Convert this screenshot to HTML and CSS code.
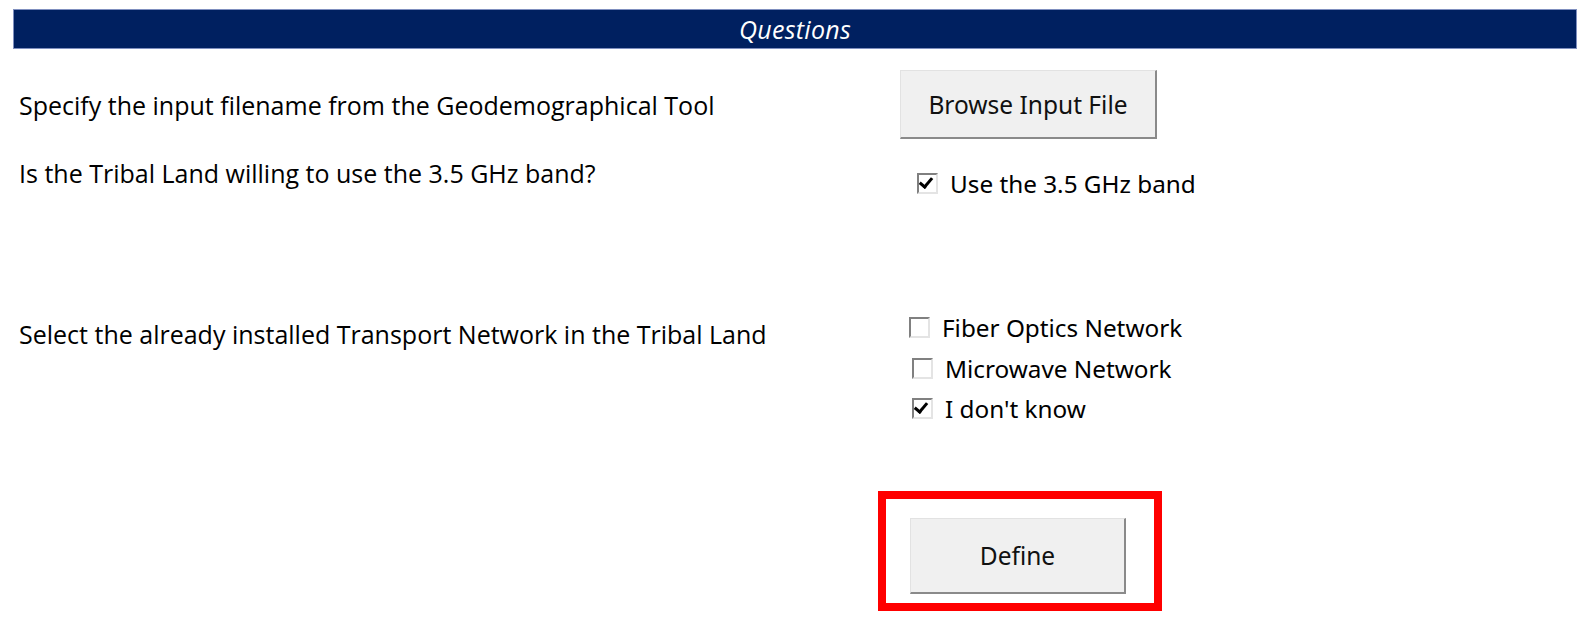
FILE: index.html
```html
<!DOCTYPE html>
<html>
<head>
<meta charset="utf-8">
<link rel="stylesheet" href="styles.css">
</head>
<body>
<div class="page">
  <div class="header">Questions</div>
  <div class="row row-file">
    <div class="label">Specify the input filename from the Geodemographical Tool</div>
    <div class="ctrl">
      <button class="btn btn-browse">Browse Input File</button>
    </div>
  </div>
  <div class="row row-band">
    <div class="label">Is the Tribal Land willing to use the 3.5 GHz band?</div>
    <div class="ctrl">
      <label class="check check-band"><span class="box checked"></span><span class="ctext">Use the 3.5 GHz band</span></label>
    </div>
  </div>
  <div class="row row-net">
    <div class="label">Select the already installed Transport Network in the Tribal Land</div>
    <div class="ctrl checks">
      <label class="check check-fiber"><span class="box"></span><span class="ctext">Fiber Optics Network</span></label>
      <label class="check check-micro"><span class="box"></span><span class="ctext">Microwave Network</span></label>
      <label class="check check-micro"><span class="box checked"></span><span class="ctext">I don't know</span></label>
    </div>
  </div>
  <div class="row row-define">
    <div class="label"></div>
    <div class="ctrl">
      <div class="highlight">
        <button class="btn btn-define">Define</button>
      </div>
    </div>
  </div>
</div>
</body>
</html>
```
FILE: styles.css
```css
html, body {
  margin: 0;
  padding: 0;
  background: #ffffff;
}
.page {
  padding: 9px 10px 0 13px;
}
.header {
  height: 38px;
  background: #002060;
  border: 1px solid #7f8fbf;
  color: #ffffff;
  font-family: "Open Sans", "Liberation Sans", sans-serif;
  font-style: italic;
  font-size: 25px;
  letter-spacing: 0.3px;
  display: flex;
  align-items: center;
  justify-content: center;
}
.row {
  display: flex;
  padding-left: 6px;
}
.label {
  width: 859px;
  flex: none;
  font-family: "Open Sans", "Liberation Sans", sans-serif;
  font-size: 25px;
  line-height: 34px;
  color: #000;
}
.ctrl {
  flex: none;
}
.row-file {
  margin-top: 21px;
  align-items: center;
  height: 69px;
}
.btn {
  font-family: "Noto Sans", "DejaVu Sans", sans-serif;
  font-size: 24.5px;
  color: #111;
  background: #f0f0f0;
  border: 1px solid #e2e2e2;
  border-right: 2px solid #8a8a8a;
  border-bottom: 2px solid #8a8a8a;
  padding: 0;
  display: flex;
  align-items: center;
  justify-content: center;
}
.btn-browse {
  margin-left: 22px;
  width: 257px;
  height: 69px;
}
.row-band {
  margin-top: 11px;
  height: 60px;
}
.row-band .label {
  margin-top: 6px;
}
.check {
  display: flex;
  align-items: center;
  font-family: "Noto Sans", "DejaVu Sans", sans-serif;
  font-size: 24.3px;
  color: #000;
  height: 41px;
}
.check-band {
  margin-left: 39px;
  margin-top: 13px;
}
.box {
  width: 17px;
  height: 17px;
  background: #fff;
  border-top: 2px solid #808080;
  border-left: 2px solid #808080;
  border-right: 2px solid #e4e4e4;
  border-bottom: 2px solid #e4e4e4;
  margin-right: 12px;
  position: relative;
  flex: none;
}
.box.checked::after {
  content: "";
  position: absolute;
  left: 3px;
  top: 0px;
  width: 5px;
  height: 10px;
  border-right: 3.5px solid #000;
  border-bottom: 3.5px solid #000;
  transform: rotate(40deg);
  transform-origin: 50% 50%;
}
.row-net {
  margin-top: 95px;
  height: 124px;
}
.row-net .label {
  margin-top: 12px;
}
.checks {
  display: flex;
  flex-direction: column;
  margin-top: 2px;
}
.check-fiber {
  margin-left: 31px;
}
.check-micro {
  margin-left: 34px;
}
.row-define {
  margin-top: 62px;
}
.highlight {
  width: 268px;
  height: 104px;
  border: 8px solid #ff0000;
  display: flex;
  align-items: flex-start;
}
.btn-define {
  margin-left: 24px;
  margin-top: 19px;
  width: 216px;
  height: 76px;
}
```
